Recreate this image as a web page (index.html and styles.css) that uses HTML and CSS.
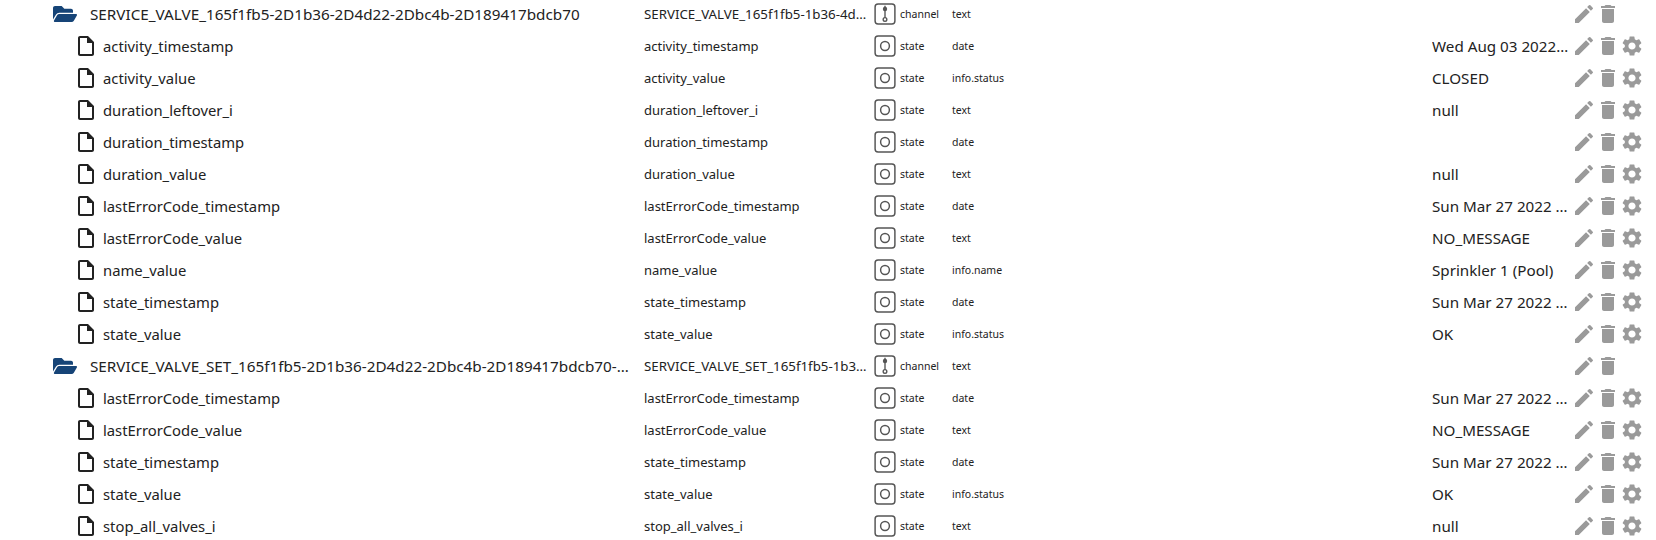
FILE: index.html
```html
<!DOCTYPE html>
<html>
<head>
<meta charset="utf-8">
<title>Objects</title>
<link rel="stylesheet" href="styles.css">
</head>
<body>
<svg class="defs" width="0" height="0" aria-hidden="true">
<symbol id="i-folder" viewBox="0 0 576 512"><path d="M572.694 292.093L500.27 416.248A63.997 63.997 0 0 1 444.989 448H45.025c-18.523 0-30.064-20.093-20.731-36.093l72.424-124.155A64 64 0 0 1 152 256h399.964c18.523 0 30.064 20.093 20.73 36.093zM152 224h328v-48c0-26.51-21.49-48-48-48H272l-64-64H48C21.49 64 0 85.49 0 112v278.046l69.077-118.418C86.214 242.25 118.5 224 152 224z"/></symbol>
<symbol id="i-file" viewBox="0 0 24 24"><path d="M14 2H6c-1.1 0-2 .9-2 2v16c0 1.1.9 2 2 2h12c1.1 0 2-.9 2-2V8l-6-6zm4 18H6V4h7v5h5v11z"/></symbol>
<symbol id="i-pen" viewBox="0 0 24 24"><path d="M3 17.25V21h3.75L17.81 9.94l-3.75-3.75L3 17.25zM20.71 7.04a1 1 0 0 0 0-1.41l-2.34-2.34a1 1 0 0 0-1.41 0l-1.83 1.83 3.75 3.75 1.83-1.83z"/></symbol>
<symbol id="i-trash" viewBox="0 0 24 24"><path d="M6 19c0 1.1.9 2 2 2h8c1.1 0 2-.9 2-2V7H6v12zM19 4h-3.5l-1-1h-5l-1 1H5v2h14V4z"/></symbol>
<symbol id="i-gear" viewBox="0 0 24 24"><path d="M19.14 12.94c.04-.3.06-.61.06-.94 0-.32-.02-.64-.07-.94l2.03-1.58a.49.49 0 0 0 .12-.61l-1.92-3.32a.488.488 0 0 0-.59-.22l-2.39.96c-.5-.38-1.03-.7-1.62-.94l-.36-2.54a.484.484 0 0 0-.48-.41h-3.84c-.24 0-.43.17-.47.41l-.36 2.54c-.59.24-1.13.57-1.62.94l-2.39-.96c-.22-.08-.47 0-.59.22L2.74 8.87c-.12.21-.08.47.12.61l2.03 1.58c-.05.3-.09.63-.09.94s.02.64.07.94l-2.03 1.58a.49.49 0 0 0-.12.61l1.92 3.32c.12.22.37.29.59.22l2.39-.96c.5.38 1.03.7 1.62.94l.36 2.54c.05.24.24.41.48.41h3.84c.24 0 .44-.17.47-.41l.36-2.54c.59-.24 1.13-.56 1.62-.94l2.39.96c.22.08.47 0 .59-.22l1.92-3.32c.12-.22.07-.47-.12-.61l-2.01-1.58zM12 15.6c-1.98 0-3.6-1.62-3.6-3.6s1.62-3.6 3.6-3.6 3.6 1.62 3.6 3.6-1.62 3.6-3.6 3.6z"/></symbol>
<symbol id="i-state" viewBox="0 0 24 24"><rect x="1.2" y="1.2" width="21.6" height="21.6" rx="3.2" fill="none" stroke="currentColor" stroke-width="1.6"/><circle cx="12" cy="12" r="4.8" fill="none" stroke="currentColor" stroke-width="1.6"/></symbol>
<symbol id="i-channel" viewBox="0 0 24 24"><rect x="1.2" y="1.2" width="21.6" height="21.6" rx="3.2" fill="none" stroke="currentColor" stroke-width="1.6"/><circle cx="12" cy="6.5" r="2.4" fill="currentColor"/><path d="M12 3v13" stroke="currentColor" stroke-width="1.5"/><circle cx="12" cy="18" r="2" fill="none" stroke="currentColor" stroke-width="1.5"/></symbol>
</svg>
<main class="tree">

<div class="row folder">
<svg class="ico-folder"><use href="#i-folder"/></svg>
<span class="c-id">SERVICE_VALVE_165f1fb5-2D1b36-2D4d22-2Dbc4b-2D189417bdcb70</span>
<span class="c-name">SERVICE_VALVE_165f1fb5-1b36-4d22-bc4b</span>
<svg class="ico-type"><use href="#i-channel"/></svg><span class="c-type">channel</span>
<span class="c-role">text</span>
<span class="c-val"></span>
<span class="actions"><svg class="ico-act"><use href="#i-pen"/></svg><svg class="ico-act"><use href="#i-trash"/></svg><span class="ico-gap"></span></span>
</div>

<div class="row"><svg class="ico-file"><use href="#i-file"/></svg><span class="c-id">activity_timestamp</span><span class="c-name">activity_timestamp</span><svg class="ico-type"><use href="#i-state"/></svg><span class="c-type">state</span><span class="c-role">date</span><span class="c-val">Wed Aug 03 2022 16:47:11</span><span class="actions"><svg class="ico-act"><use href="#i-pen"/></svg><svg class="ico-act"><use href="#i-trash"/></svg><svg class="ico-act"><use href="#i-gear"/></svg></span></div>
<div class="row"><svg class="ico-file"><use href="#i-file"/></svg><span class="c-id">activity_value</span><span class="c-name">activity_value</span><svg class="ico-type"><use href="#i-state"/></svg><span class="c-type">state</span><span class="c-role">info.status</span><span class="c-val">CLOSED</span><span class="actions"><svg class="ico-act"><use href="#i-pen"/></svg><svg class="ico-act"><use href="#i-trash"/></svg><svg class="ico-act"><use href="#i-gear"/></svg></span></div>
<div class="row"><svg class="ico-file"><use href="#i-file"/></svg><span class="c-id">duration_leftover_i</span><span class="c-name">duration_leftover_i</span><svg class="ico-type"><use href="#i-state"/></svg><span class="c-type">state</span><span class="c-role">text</span><span class="c-val">null</span><span class="actions"><svg class="ico-act"><use href="#i-pen"/></svg><svg class="ico-act"><use href="#i-trash"/></svg><svg class="ico-act"><use href="#i-gear"/></svg></span></div>
<div class="row"><svg class="ico-file"><use href="#i-file"/></svg><span class="c-id">duration_timestamp</span><span class="c-name">duration_timestamp</span><svg class="ico-type"><use href="#i-state"/></svg><span class="c-type">state</span><span class="c-role">date</span><span class="c-val"></span><span class="actions"><svg class="ico-act"><use href="#i-pen"/></svg><svg class="ico-act"><use href="#i-trash"/></svg><svg class="ico-act"><use href="#i-gear"/></svg></span></div>
<div class="row"><svg class="ico-file"><use href="#i-file"/></svg><span class="c-id">duration_value</span><span class="c-name">duration_value</span><svg class="ico-type"><use href="#i-state"/></svg><span class="c-type">state</span><span class="c-role">text</span><span class="c-val">null</span><span class="actions"><svg class="ico-act"><use href="#i-pen"/></svg><svg class="ico-act"><use href="#i-trash"/></svg><svg class="ico-act"><use href="#i-gear"/></svg></span></div>
<div class="row"><svg class="ico-file"><use href="#i-file"/></svg><span class="c-id">lastErrorCode_timestamp</span><span class="c-name">lastErrorCode_timestamp</span><svg class="ico-type"><use href="#i-state"/></svg><span class="c-type">state</span><span class="c-role">date</span><span class="c-val">Sun Mar 27 2022 16:47:11</span><span class="actions"><svg class="ico-act"><use href="#i-pen"/></svg><svg class="ico-act"><use href="#i-trash"/></svg><svg class="ico-act"><use href="#i-gear"/></svg></span></div>
<div class="row"><svg class="ico-file"><use href="#i-file"/></svg><span class="c-id">lastErrorCode_value</span><span class="c-name">lastErrorCode_value</span><svg class="ico-type"><use href="#i-state"/></svg><span class="c-type">state</span><span class="c-role">text</span><span class="c-val">NO_MESSAGE</span><span class="actions"><svg class="ico-act"><use href="#i-pen"/></svg><svg class="ico-act"><use href="#i-trash"/></svg><svg class="ico-act"><use href="#i-gear"/></svg></span></div>
<div class="row"><svg class="ico-file"><use href="#i-file"/></svg><span class="c-id">name_value</span><span class="c-name">name_value</span><svg class="ico-type"><use href="#i-state"/></svg><span class="c-type">state</span><span class="c-role">info.name</span><span class="c-val">Sprinkler 1 (Pool)</span><span class="actions"><svg class="ico-act"><use href="#i-pen"/></svg><svg class="ico-act"><use href="#i-trash"/></svg><svg class="ico-act"><use href="#i-gear"/></svg></span></div>
<div class="row"><svg class="ico-file"><use href="#i-file"/></svg><span class="c-id">state_timestamp</span><span class="c-name">state_timestamp</span><svg class="ico-type"><use href="#i-state"/></svg><span class="c-type">state</span><span class="c-role">date</span><span class="c-val">Sun Mar 27 2022 16:47:11</span><span class="actions"><svg class="ico-act"><use href="#i-pen"/></svg><svg class="ico-act"><use href="#i-trash"/></svg><svg class="ico-act"><use href="#i-gear"/></svg></span></div>
<div class="row"><svg class="ico-file"><use href="#i-file"/></svg><span class="c-id">state_value</span><span class="c-name">state_value</span><svg class="ico-type"><use href="#i-state"/></svg><span class="c-type">state</span><span class="c-role">info.status</span><span class="c-val">OK</span><span class="actions"><svg class="ico-act"><use href="#i-pen"/></svg><svg class="ico-act"><use href="#i-trash"/></svg><svg class="ico-act"><use href="#i-gear"/></svg></span></div>

<div class="row folder">
<svg class="ico-folder"><use href="#i-folder"/></svg>
<span class="c-id">SERVICE_VALVE_SET_165f1fb5-2D1b36-2D4d22-2Dbc4b-2D189417bdcb70-2D1</span>
<span class="c-name">SERVICE_VALVE_SET_165f1fb5-1b36-4d22</span>
<svg class="ico-type"><use href="#i-channel"/></svg><span class="c-type">channel</span>
<span class="c-role">text</span>
<span class="c-val"></span>
<span class="actions"><svg class="ico-act"><use href="#i-pen"/></svg><svg class="ico-act"><use href="#i-trash"/></svg><span class="ico-gap"></span></span>
</div>

<div class="row"><svg class="ico-file"><use href="#i-file"/></svg><span class="c-id">lastErrorCode_timestamp</span><span class="c-name">lastErrorCode_timestamp</span><svg class="ico-type"><use href="#i-state"/></svg><span class="c-type">state</span><span class="c-role">date</span><span class="c-val">Sun Mar 27 2022 16:47:11</span><span class="actions"><svg class="ico-act"><use href="#i-pen"/></svg><svg class="ico-act"><use href="#i-trash"/></svg><svg class="ico-act"><use href="#i-gear"/></svg></span></div>
<div class="row"><svg class="ico-file"><use href="#i-file"/></svg><span class="c-id">lastErrorCode_value</span><span class="c-name">lastErrorCode_value</span><svg class="ico-type"><use href="#i-state"/></svg><span class="c-type">state</span><span class="c-role">text</span><span class="c-val">NO_MESSAGE</span><span class="actions"><svg class="ico-act"><use href="#i-pen"/></svg><svg class="ico-act"><use href="#i-trash"/></svg><svg class="ico-act"><use href="#i-gear"/></svg></span></div>
<div class="row"><svg class="ico-file"><use href="#i-file"/></svg><span class="c-id">state_timestamp</span><span class="c-name">state_timestamp</span><svg class="ico-type"><use href="#i-state"/></svg><span class="c-type">state</span><span class="c-role">date</span><span class="c-val">Sun Mar 27 2022 16:47:11</span><span class="actions"><svg class="ico-act"><use href="#i-pen"/></svg><svg class="ico-act"><use href="#i-trash"/></svg><svg class="ico-act"><use href="#i-gear"/></svg></span></div>
<div class="row"><svg class="ico-file"><use href="#i-file"/></svg><span class="c-id">state_value</span><span class="c-name">state_value</span><svg class="ico-type"><use href="#i-state"/></svg><span class="c-type">state</span><span class="c-role">info.status</span><span class="c-val">OK</span><span class="actions"><svg class="ico-act"><use href="#i-pen"/></svg><svg class="ico-act"><use href="#i-trash"/></svg><svg class="ico-act"><use href="#i-gear"/></svg></span></div>
<div class="row"><svg class="ico-file"><use href="#i-file"/></svg><span class="c-id">stop_all_valves_i</span><span class="c-name">stop_all_valves_i</span><svg class="ico-type"><use href="#i-state"/></svg><span class="c-type">state</span><span class="c-role">text</span><span class="c-val">null</span><span class="actions"><svg class="ico-act"><use href="#i-pen"/></svg><svg class="ico-act"><use href="#i-trash"/></svg><svg class="ico-act"><use href="#i-gear"/></svg></span></div>
</main>
</body>
</html>
```
FILE: styles.css
```css
html, body { margin: 0; padding: 0; background: #fff; overflow: hidden; }
body { height: 540px; font-family: "Noto Sans", "Open Sans", sans-serif; color: #222; }
.defs { position: absolute; }
.tree { display: flex; flex-direction: column; margin-top: -2px; }
.row { display: flex; align-items: center; height: 32px; padding-left: 74px; font-size: 14.8px; white-space: nowrap; }
.row.folder { padding-left: 53px; }
.ico-folder { width: 24px; height: 22px; fill: #164477; margin-right: 13px; flex: none; }
.ico-file { width: 24px; height: 24px; fill: #222; margin-right: 5px; flex: none; }
.c-id { width: 541px; overflow: hidden; text-overflow: ellipsis; flex: none; }
.row.folder .c-id { width: 554px; padding-right: 11px; box-sizing: border-box; font-size: 15.25px; }
.c-name { width: 230px; padding-right: 6px; box-sizing: border-box; font-size: 13px; overflow: hidden; text-overflow: ellipsis; flex: none; }
.row.folder .c-name { font-size: 13.3px; padding-right: 3px; }
.ico-type { width: 22px; height: 22px; color: #555; margin-right: 4px; flex: none; }
.c-type { width: 52px; font-size: 10.5px; flex: none; }
.c-role { width: 480px; font-size: 10.5px; flex: none; }
.c-val { width: 140px; padding-right: 3px; box-sizing: border-box; font-size: 15.2px; overflow: hidden; text-overflow: ellipsis; flex: none; }
.actions { display: flex; align-items: center; flex: none; }
.ico-act { width: 24px; height: 24px; fill: #9a9a9a; flex: none; }
.ico-gap { width: 24px; height: 24px; }
```
